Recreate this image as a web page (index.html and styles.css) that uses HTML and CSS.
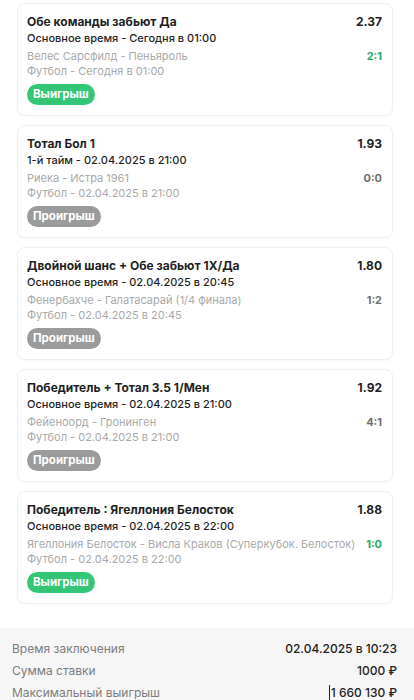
FILE: index.html
```html
<!DOCTYPE html>
<html lang="ru">
<head>
    <meta charset="UTF-8">
    <meta name="viewport" content="width=device-width, initial-scale=1.0">
    <title>Экспресс</title>
    <link rel="stylesheet" href="styles.css">
</head>
<body>
    <div class="bets">
        <div class="bet">
            <div class="bet-row">
                <div class="bet-title">Обе команды забьют Да</div>
                <div class="bet-odds">2.37</div>
            </div>
            <div class="bet-period">Основное время - Сегодня в 01:00</div>
            <div class="bet-row bet-match">
                <div class="bet-teams">Велес Сарсфилд - Пеньяроль</div>
                <div class="bet-score win">2:1</div>
            </div>
            <div class="bet-sport">Футбол - Сегодня в 01:00</div>
            <span class="badge badge-win">Выигрыш</span>
        </div>

        <div class="bet">
            <div class="bet-row">
                <div class="bet-title">Тотал Бол 1</div>
                <div class="bet-odds">1.93</div>
            </div>
            <div class="bet-period">1-й тайм - 02.04.2025 в 21:00</div>
            <div class="bet-row bet-match">
                <div class="bet-teams">Риека - Истра 1961</div>
                <div class="bet-score">0:0</div>
            </div>
            <div class="bet-sport">Футбол - 02.04.2025 в 21:00</div>
            <span class="badge badge-lose">Проигрыш</span>
        </div>

        <div class="bet">
            <div class="bet-row">
                <div class="bet-title">Двойной шанс + Обе забьют 1X/Да</div>
                <div class="bet-odds">1.80</div>
            </div>
            <div class="bet-period">Основное время - 02.04.2025 в 20:45</div>
            <div class="bet-row bet-match">
                <div class="bet-teams">Фенербахче - Галатасарай (1/4 финала)</div>
                <div class="bet-score">1:2</div>
            </div>
            <div class="bet-sport">Футбол - 02.04.2025 в 20:45</div>
            <span class="badge badge-lose">Проигрыш</span>
        </div>

        <div class="bet">
            <div class="bet-row">
                <div class="bet-title">Победитель + Тотал 3.5 1/Мен</div>
                <div class="bet-odds">1.92</div>
            </div>
            <div class="bet-period">Основное время - 02.04.2025 в 21:00</div>
            <div class="bet-row bet-match">
                <div class="bet-teams">Фейеноорд - Гронинген</div>
                <div class="bet-score">4:1</div>
            </div>
            <div class="bet-sport">Футбол - 02.04.2025 в 21:00</div>
            <span class="badge badge-lose">Проигрыш</span>
        </div>

        <div class="bet">
            <div class="bet-row">
                <div class="bet-title">Победитель : Ягеллония Белосток</div>
                <div class="bet-odds">1.88</div>
            </div>
            <div class="bet-period">Основное время - 02.04.2025 в 22:00</div>
            <div class="bet-row bet-match">
                <div class="bet-teams">Ягеллония Белосток - Висла Краков (Суперкубок. Белосток)</div>
                <div class="bet-score win">1:0</div>
            </div>
            <div class="bet-sport">Футбол - 02.04.2025 в 22:00</div>
            <span class="badge badge-win">Выигрыш</span>
        </div>
    </div>

    <div class="summary">
        <div class="summary-row">
            <span class="summary-label">Время заключения</span>
            <span class="summary-value">02.04.2025 в 10:23</span>
        </div>
        <div class="summary-row">
            <span class="summary-label">Сумма ставки</span>
            <span class="summary-value">1000 ₽</span>
        </div>
        <div class="summary-row">
            <span class="summary-label">Максимальный выигрыш</span>
            <span class="summary-value"><span class="caret"></span>1 660 130 ₽</span>
        </div>
    </div>
</body>
</html>
```
FILE: styles.css
```css
body {
    font-family: Inter, "Noto Sans", sans-serif;
    margin: 0;
    padding: 0;
    background-color: #fff;
    color: #1f1f1f;
}

.bets {
    padding: 3px 21px 0 17px;
    display: flex;
    flex-direction: column;
    gap: 9px;
}

.bet {
    height: 113px;
    box-sizing: border-box;
    padding: 10px 10px 10px 9px;
    border: 1px solid #efefef;
    border-radius: 8px;
    background-color: #fff;
    box-shadow: 0 1px 3px rgba(0, 0, 0, 0.03);
}

.bet-row {
    display: flex;
    justify-content: space-between;
    align-items: baseline;
    gap: 6px;
}

.bet-title {
    font-size: 12px;
    font-weight: 700;
    line-height: 16px;
}

.bet-odds {
    font-size: 12px;
    font-weight: 700;
    line-height: 16px;
}

.bet-period {
    font-size: 11px;
    font-weight: 500;
    line-height: 16px;
}

.bet-match {
    margin-top: 2.5px;
}

.bet-teams,
.bet-sport {
    font-size: 11px;
    color: #a9a9a9;
    line-height: 15px;
    white-space: nowrap;
}

.bet-score {
    font-size: 11px;
    font-weight: 700;
    color: #6f6f6f;
    line-height: 15px;
}

.bet-score.win {
    color: #2aa86a;
}

.badge {
    display: inline-block;
    margin-top: 5.5px;
    height: 21px;
    line-height: 21px;
    padding: 0 6px;
    border-radius: 11px;
    color: #fff;
    font-size: 11.5px;
    font-weight: 700;
}

.badge-win {
    background-color: #33c775;
}

.badge-lose {
    background-color: #9b9b9b;
}

.summary {
    margin-top: 24px;
    background-color: #f6f6f6;
    padding: 9px 17px 10px 12px;
}

.summary-row {
    display: flex;
    justify-content: space-between;
    align-items: center;
    height: 22px;
}

.summary-label {
    font-size: 12px;
    color: #7d7d7d;
}

.summary-value {
    font-size: 12px;
    font-weight: 500;
    color: #222;
    display: flex;
    align-items: center;
}

.caret {
    display: inline-block;
    width: 1px;
    height: 15px;
    background-color: #222;
    margin-right: 1px;
}
```
